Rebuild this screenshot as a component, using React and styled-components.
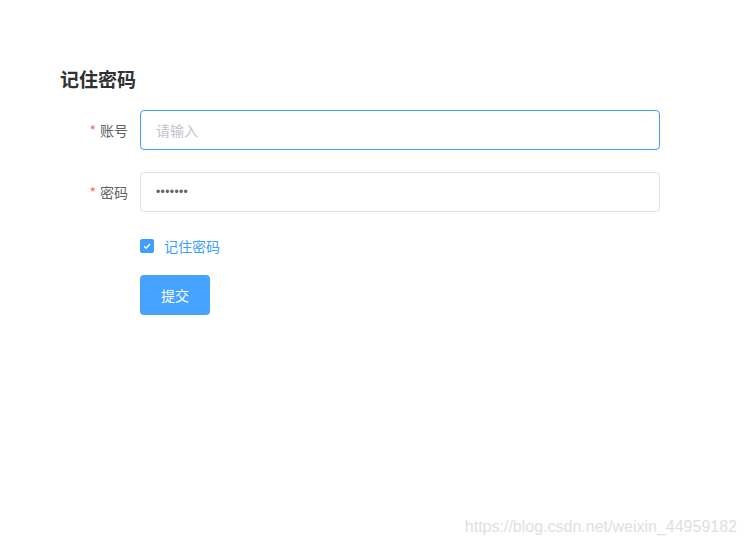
import React, { useState } from 'react';
import styled, { createGlobalStyle } from 'styled-components';

const GlobalStyle = createGlobalStyle`
    html, body {
        margin: 0;
        padding: 0;
        background: #fff;
        font-family: "Noto Sans CJK SC", "Liberation Sans", sans-serif;
    }
`;

const App = () => {
    const [account, setAccount] = useState('');
    const [password, setPassword] = useState('1234567');
    const [remember, setRemember] = useState(true);

    return (
        <Page>
            <GlobalStyle />
            <Title>记住密码</Title>
            <Form onSubmit={(e) => e.preventDefault()}>
                <FormItem>
                    <Label><Star>*</Star>账号</Label>
                    <Input
                        type="text"
                        placeholder="请输入"
                        value={account}
                        onChange={(e) => setAccount(e.target.value)}
                        $focused
                    />
                </FormItem>
                <FormItem>
                    <Label><Star>*</Star>密码</Label>
                    <PasswordInput
                        type="password"
                        value={password}
                        onChange={(e) => setPassword(e.target.value)}
                    />
                </FormItem>
                <FormItem $compact>
                    <Spacer />
                    <CheckLabel onClick={() => setRemember(!remember)}>
                        <CheckBox $checked={remember}>
                            {remember && (
                                <svg width="10" height="10" viewBox="0 0 10 10">
                                    <path d="M2.2 5.2 L4.2 7.2 L8 3" fill="none" stroke="#fff" strokeWidth="1.3" />
                                </svg>
                            )}
                        </CheckBox>
                        <CheckText $checked={remember}>记住密码</CheckText>
                    </CheckLabel>
                </FormItem>
                <FormItem>
                    <Spacer />
                    <Button type="submit">提交</Button>
                </FormItem>
            </Form>
            <Watermark>https://blog.csdn.net/weixin_44959182</Watermark>
        </Page>
    );
};

export default App;

const Page = styled.div`
    position: relative;
    width: 745px;
    height: 544px;
    padding: 66px 0 0 60px;
    box-sizing: border-box;
`;

const Title = styled.h3`
    margin: 0 0 18px;
    font-size: 19px;
    font-weight: bold;
    line-height: 26px;
    color: #303133;
`;

const Form = styled.form`
    display: flex;
    flex-direction: column;
    gap: 22px;
`;

const FormItem = styled.div`
    display: flex;
    align-items: center;
    height: ${({ $compact }) => ($compact ? '24px' : '40px')};
    margin-bottom: ${({ $compact }) => ($compact ? '-5px' : '0')};
`;

const Label = styled.label`
    width: 80px;
    box-sizing: border-box;
    padding-right: 12px;
    text-align: right;
    font-size: 14px;
    color: #606266;
`;

const Star = styled.span`
    color: #f56c6c;
    margin-right: 4px;
`;

const Spacer = styled.div`
    width: 80px;
`;

const Input = styled.input`
    width: 520px;
    height: 40px;
    box-sizing: border-box;
    padding: 0 15px;
    border: 1px solid ${({ $focused }) => ($focused ? '#409eff' : '#dcdfe6')};
    border-radius: 4px;
    font-size: 14px;
    color: #606266;
    outline: none;
    font-family: inherit;

    &::placeholder {
        color: #c0c4cc;
    }
`;

const PasswordInput = styled(Input)`
    font-family: "Liberation Sans", Arial, sans-serif;
    font-size: 12px;
    letter-spacing: 0.4px;
`;

const CheckLabel = styled.div`
    display: flex;
    align-items: center;
    cursor: pointer;
`;

const CheckBox = styled.span`
    width: 14px;
    height: 14px;
    box-sizing: border-box;
    border-radius: 2px;
    border: 1px solid ${({ $checked }) => ($checked ? '#409eff' : '#dcdfe6')};
    background: ${({ $checked }) => ($checked ? '#409eff' : '#fff')};
    display: flex;
    align-items: center;
    justify-content: center;
`;

const CheckText = styled.span`
    margin-left: 10px;
    font-size: 14px;
    color: ${({ $checked }) => ($checked ? '#409eff' : '#606266')};
`;

const Button = styled.button`
    width: 70px;
    height: 40px;
    border: none;
    border-radius: 4px;
    background: #46a3ff;
    color: #fff;
    font-size: 14px;
    font-family: inherit;
    cursor: pointer;
`;

const Watermark = styled.div`
    position: absolute;
    right: 8px;
    bottom: 8px;
    font-family: "Liberation Sans", Arial, sans-serif;
    font-size: 16px;
    color: #e0e0e0;
`;
